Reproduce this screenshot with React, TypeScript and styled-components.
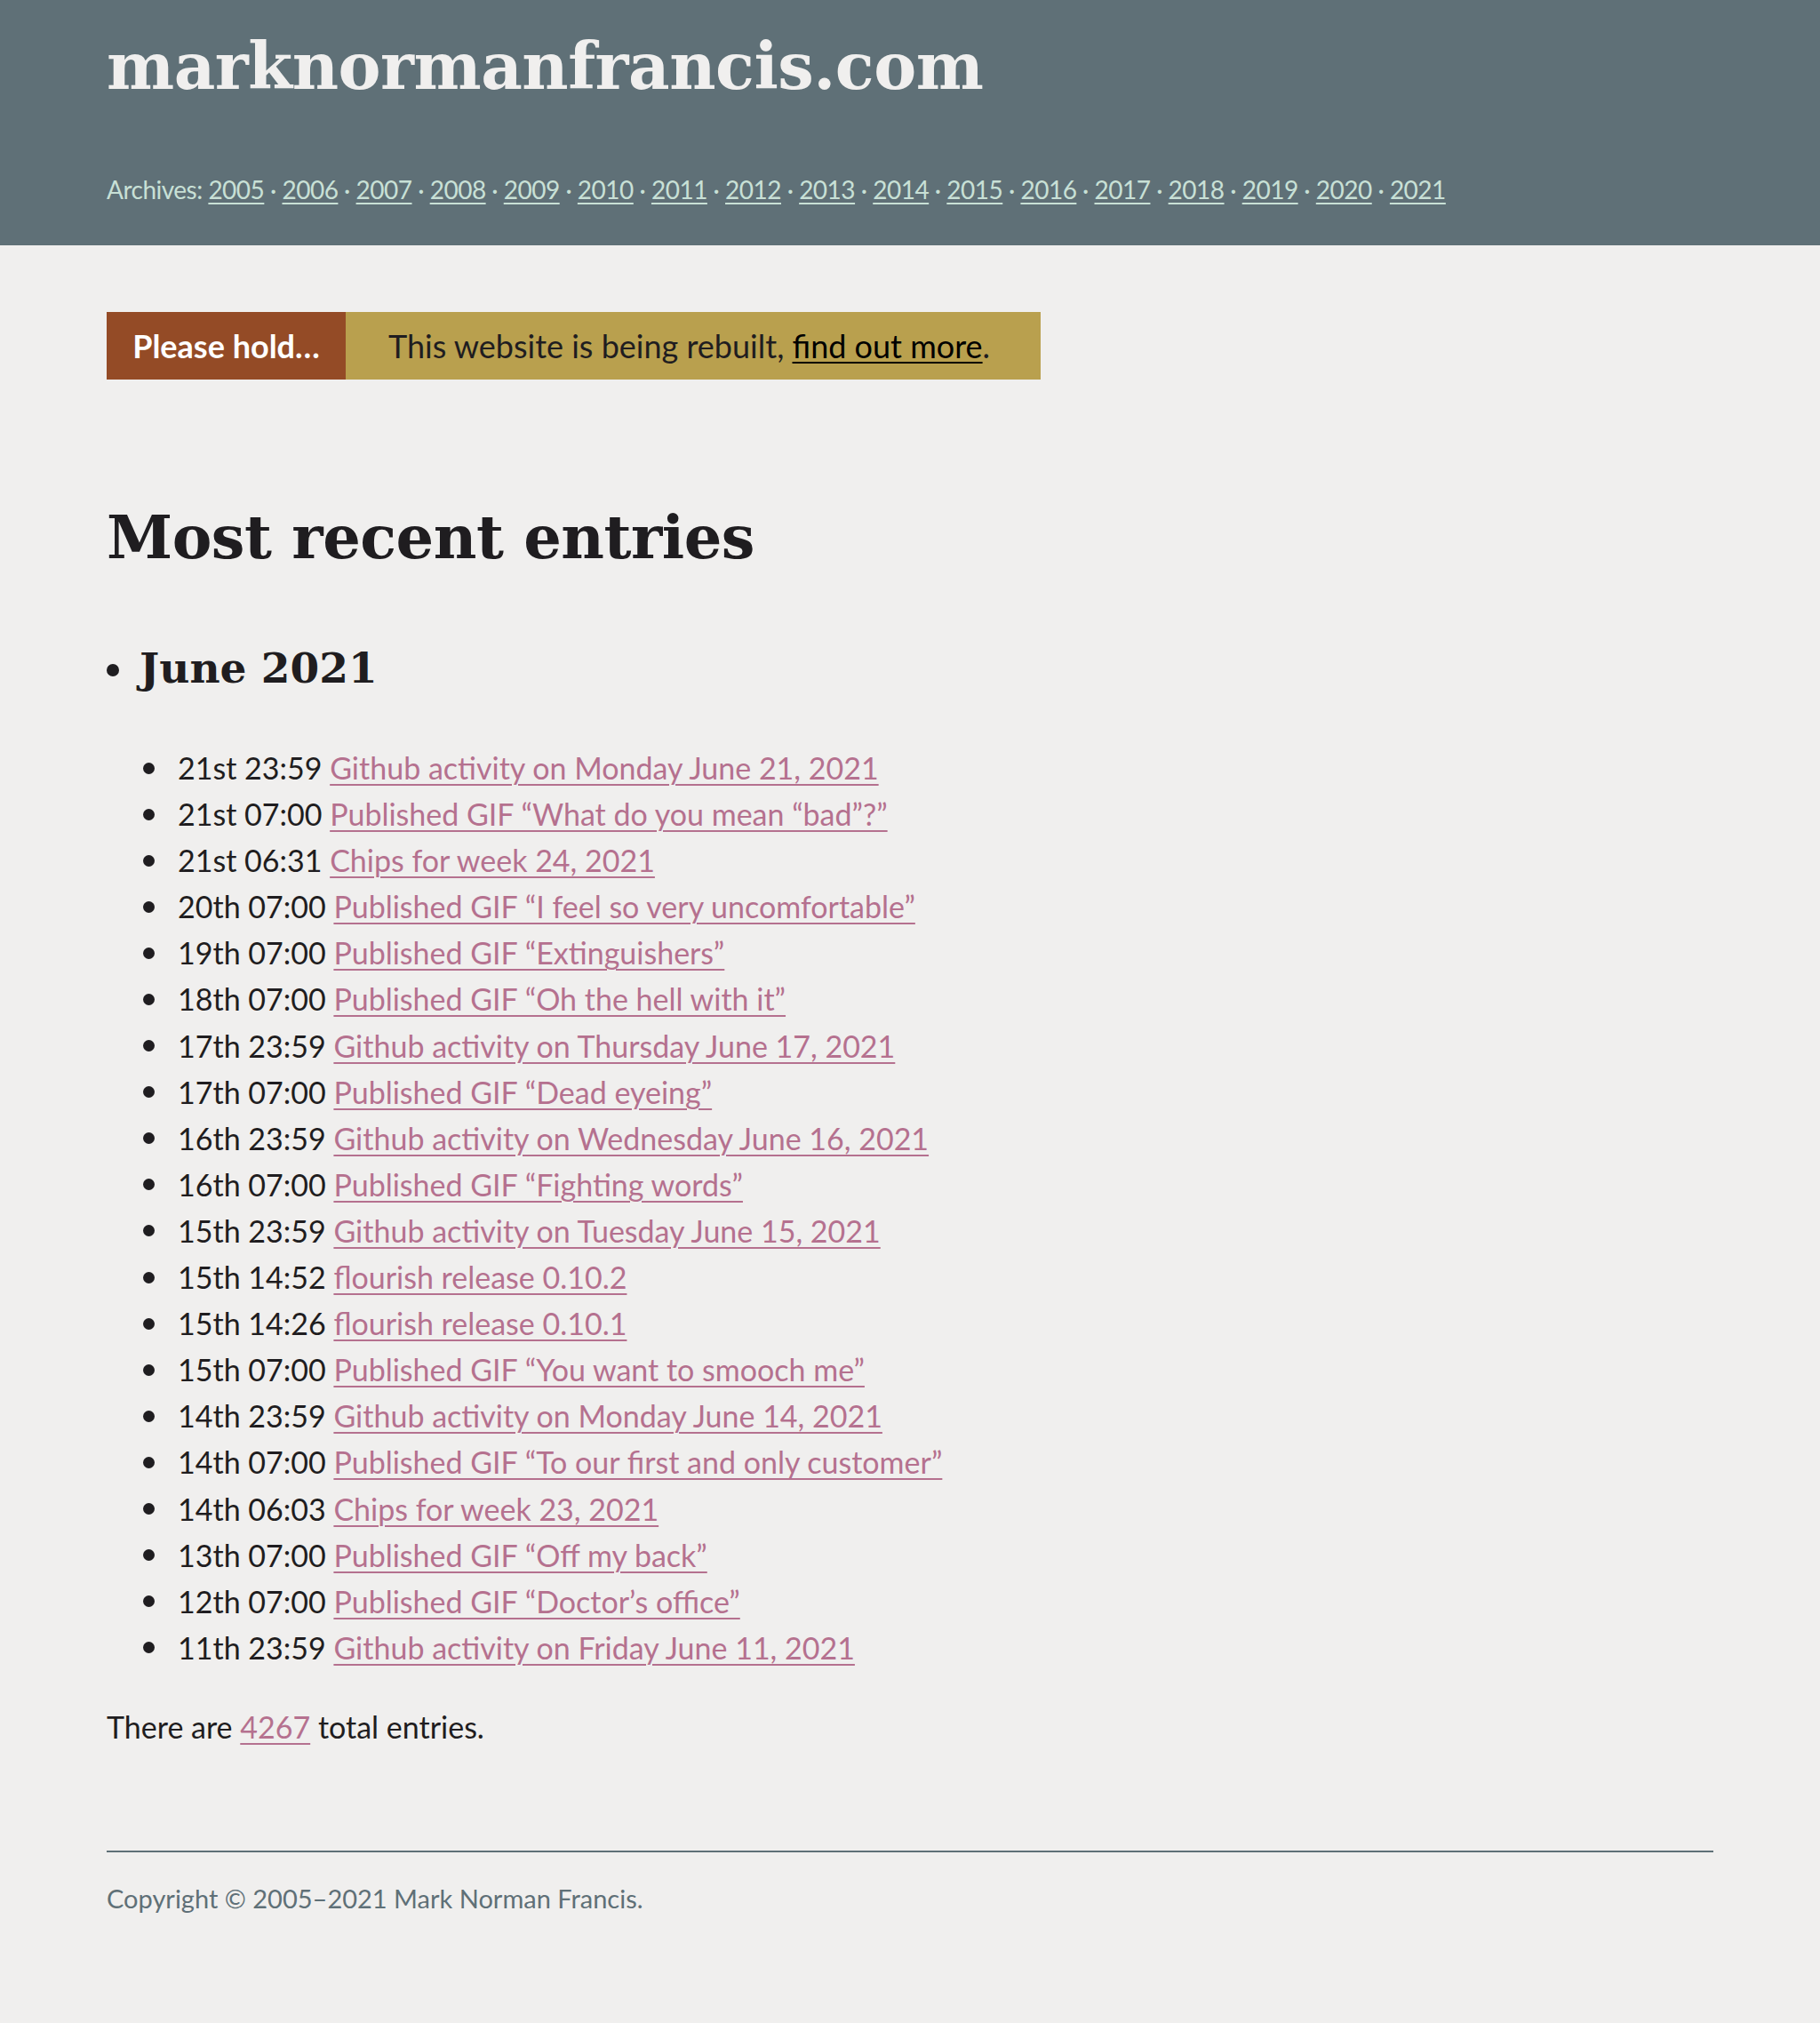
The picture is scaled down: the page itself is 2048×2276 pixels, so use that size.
import styled, { createGlobalStyle } from "styled-components";

const colors = {
  slate: "#5f7077",
  mint: "#c8e0d6",
  paper: "#f0efee",
  ink: "#1f1d20",
  rust: "#944b26",
  gold: "#b9a04e",
  mauve: "#b5718f",
};

const fonts = {
  sans: `Lato, "Open Sans", sans-serif`,
  serif: `"DejaVu Serif", "Liberation Serif", serif`,
};

const GlobalStyle = createGlobalStyle`
  html, body {
    margin: 0;
    padding: 0;
    background: ${colors.paper};
    color: ${colors.ink};
    font-family: ${fonts.sans};
  }
  * { box-sizing: border-box; }
`;

const Masthead = styled.header`
  background: ${colors.slate};
  height: 276px;
  padding: 39px 120px 0;
  display: flex;
  flex-direction: column;
`;

const SiteName = styled.h1`
  margin: 0;
  font-family: ${fonts.serif};
  font-weight: 700;
  font-size: 72px;
  line-height: 1;
  color: ${colors.paper};
  letter-spacing: -0.5px;
`;

const Archives = styled.nav`
  margin-top: 80px;
  font-size: 28px;
  line-height: 45px;
  letter-spacing: -0.5px;
  color: ${colors.mint};

  a {
    color: ${colors.mint};
    text-decoration: underline;
    text-decoration-thickness: 2px;
    text-underline-offset: 4px;
  }
`;

const Main = styled.main`
  padding: 75px 120px 0;
`;

const Notice = styled.div`
  display: flex;
  width: 1051px;
  height: 76px;
  font-size: 36px;
`;

const NoticeLabel = styled.strong`
  width: 269px;
  background: ${colors.rust};
  color: #fff;
  font-weight: 700;
  display: flex;
  align-items: center;
  justify-content: center;
`;

const NoticeText = styled.p`
  flex: 1;
  margin: 0;
  padding-left: 48px;
  background: ${colors.gold};
  display: flex;
  align-items: center;
  white-space: pre;

  a {
    color: #000;
    text-decoration-thickness: 2px;
    text-underline-offset: 4px;
  }
`;

const Heading = styled.h2`
  margin: 144px 0 0;
  font-family: ${fonts.serif};
  font-weight: 700;
  font-size: 67px;
  line-height: 1;
  letter-spacing: -0.5px;
`;

const MonthList = styled.ul`
  list-style: none;
  margin: 90px 0 0;
  padding: 0;
`;

const Month = styled.li``;

const MonthTitle = styled.h3`
  margin: 0;
  display: flex;
  align-items: center;
  gap: 23px;
  font-family: ${fonts.serif};
  font-weight: 700;
  font-size: 47px;
  line-height: 1;

  &::before {
    content: "";
    width: 14px;
    height: 14px;
    border-radius: 50%;
    background: ${colors.ink};
    margin-top: 4px;
  }
`;

const EntryList = styled.ul`
  list-style: none;
  margin: 63px 0 0;
  padding: 0 0 0 41px;
`;

const Entry = styled.li`
  display: flex;
  align-items: center;
  gap: 26px;
  font-size: 34px;
  line-height: 52.1px;

  &::before {
    content: "";
    width: 13px;
    height: 13px;
    border-radius: 50%;
    background: ${colors.ink};
    flex: none;
  }
`;

const Link = styled.a`
  color: ${colors.mauve};
  text-decoration: underline;
  text-decoration-thickness: 2px;
  text-underline-offset: 5px;
`;

const Total = styled.p`
  margin: 37px 0 0;
  font-size: 34px;
  line-height: 52px;
`;

const Footer = styled.footer`
  margin: 113px 120px 0;
  border-top: 2px solid ${colors.slate};
  padding: 29px 0 117px;
  font-size: 29px;
  line-height: 45px;
  color: ${colors.slate};

  p { margin: 0; }
`;

const years = [
  2005, 2006, 2007, 2008, 2009, 2010, 2011, 2012, 2013, 2014, 2015, 2016,
  2017, 2018, 2019, 2020, 2021,
];

const entries: [string, string][] = [
  ["21st 23:59", "Github activity on Monday June 21, 2021"],
  ["21st 07:00", "Published GIF \u201cWhat do you mean \u201cbad\u201d?\u201d"],
  ["21st 06:31", "Chips for week 24, 2021"],
  ["20th 07:00", "Published GIF \u201cI feel so very uncomfortable\u201d"],
  ["19th 07:00", "Published GIF \u201cExtinguishers\u201d"],
  ["18th 07:00", "Published GIF \u201cOh the hell with it\u201d"],
  ["17th 23:59", "Github activity on Thursday June 17, 2021"],
  ["17th 07:00", "Published GIF \u201cDead eyeing\u201d"],
  ["16th 23:59", "Github activity on Wednesday June 16, 2021"],
  ["16th 07:00", "Published GIF \u201cFighting words\u201d"],
  ["15th 23:59", "Github activity on Tuesday June 15, 2021"],
  ["15th 14:52", "flourish release 0.10.2"],
  ["15th 14:26", "flourish release 0.10.1"],
  ["15th 07:00", "Published GIF \u201cYou want to smooch me\u201d"],
  ["14th 23:59", "Github activity on Monday June 14, 2021"],
  ["14th 07:00", "Published GIF \u201cTo our first and only customer\u201d"],
  ["14th 06:03", "Chips for week 23, 2021"],
  ["13th 07:00", "Published GIF \u201cOff my back\u201d"],
  ["12th 07:00", "Published GIF \u201cDoctor\u2019s office\u201d"],
  ["11th 23:59", "Github activity on Friday June 11, 2021"],
];

export default function App() {
  return (
    <>
      <GlobalStyle />
      <Masthead>
        <SiteName>marknormanfrancis.com</SiteName>
        <Archives>
          Archives:{" "}
          {years.map((y, i) => (
            <span key={y}>
              <a href="#">{y}</a>
              {i < years.length - 1 ? " \u00b7 " : ""}
            </span>
          ))}
        </Archives>
      </Masthead>

      <Main>
        <Notice>
          <NoticeLabel>Please hold…</NoticeLabel>
          <NoticeText>
            This website is being rebuilt, <a href="#">find out more</a>.
          </NoticeText>
        </Notice>

        <Heading>Most recent entries</Heading>

        <MonthList>
          <Month>
            <MonthTitle>June 2021</MonthTitle>
            <EntryList>
              {entries.map(([when, title]) => (
                <Entry key={when + title}>
                  <span>
                    {when} <Link href="#">{title}</Link>
                  </span>
                </Entry>
              ))}
            </EntryList>
          </Month>
        </MonthList>

        <Total>
          There are <Link href="#">4267</Link> total entries.
        </Total>
      </Main>

      <Footer>
        <p>Copyright © 2005–2021 Mark Norman Francis.</p>
      </Footer>
    </>
  );
}
